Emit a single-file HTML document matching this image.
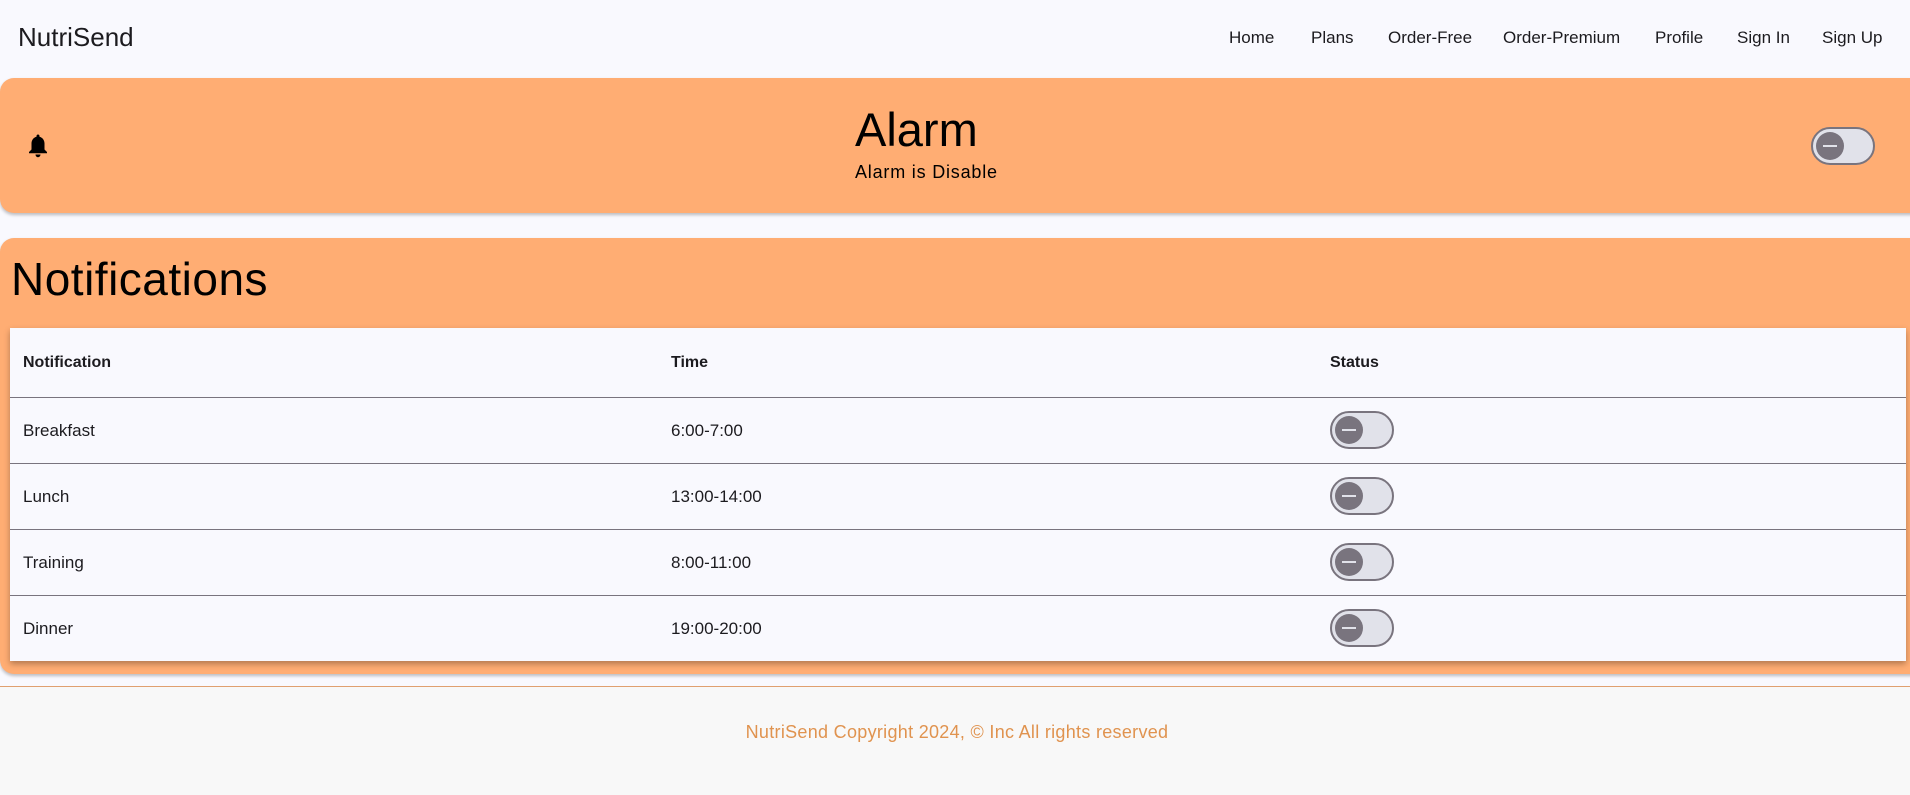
<!DOCTYPE html>
<html><head><style>
*{box-sizing:border-box;margin:0;padding:0}
body{width:1910px;height:795px;background:#f9f9fe;font-family:"Liberation Sans",sans-serif;color:#1c1b1f;position:relative;overflow:hidden}
.abs{position:absolute;white-space:nowrap}
.nav a{position:absolute;top:28px;font-size:17px;color:#1c1b1f;text-decoration:none}
.card{position:absolute;left:0;width:1930px;background:#ffad73;border-radius:14px;box-shadow:0 2px 3px rgba(0,0,0,.25)}
.tog{position:absolute;width:64px;height:38px;border:2px solid #79747e;border-radius:19px;background:#e1e2ea}
.tog::before{content:"";position:absolute;left:3px;top:3px;width:28px;height:28px;border-radius:50%;background:#79747e}
.tog::after{content:"";position:absolute;left:10px;top:16px;width:14px;height:2px;background:#e1e2ea}
.table{position:absolute;left:10px;top:328px;width:1896px;height:333px;background:#f9f9fe;box-shadow:0 3px 6px rgba(0,0,0,.3)}
.row{position:absolute;left:0;width:100%;height:66px;border-top:1px solid #79747e;font-size:17px}
.row span{position:absolute;top:23px}
</style></head><body>
<div class="abs" style="left:18px;top:22px;font-size:26px">NutriSend</div>
<div class="nav">
<a style="left:1229px">Home</a><a style="left:1311px">Plans</a><a style="left:1388px">Order-Free</a><a style="left:1503px">Order-Premium</a><a style="left:1655px">Profile</a><a style="left:1737px">Sign In</a><a style="left:1822px">Sign Up</a>
</div>
<div class="card" style="top:78px;height:135px">
<svg class="abs" style="left:26px;top:55px" width="24" height="26" viewBox="0 0 24 26"><path d="M12 1.5c1 0 1.5.7 1.5 1.6v.6c3.2.8 5 3.6 5 6.8v6l2.5 2.5v1.3H3v-1.3l2.5-2.5v-6c0-3.2 1.8-6 5-6.8v-.6c0-.9.5-1.6 1.5-1.6zM9.5 21.5h5c0 1.5-1.1 2.7-2.5 2.7s-2.5-1.2-2.5-2.7z" fill="#000"/></svg>
<div class="abs" style="left:855px;top:24px;font-size:47px;color:#000">Alarm</div>
<div class="abs" style="left:855px;top:84px;font-size:18px;letter-spacing:.8px;color:#000">Alarm is Disable</div>
<div class="tog" style="left:1811px;top:49px"></div>
</div>
<div class="card" style="top:238px;height:436px">
<div class="abs" style="left:11px;top:14px;font-size:46px;letter-spacing:.5px;color:#000">Notifications</div>
</div>
<div class="table">
<div class="row" style="top:0;height:69px;border-top:none;font-weight:bold;font-size:16px"><span style="left:13px;top:26px">Notification</span><span style="left:661px;top:26px">Time</span><span style="left:1320px;top:26px">Status</span></div>
<div class="row" style="top:69px"><span style="left:13px">Breakfast</span><span style="left:661px">6:00-7:00</span><div class="tog" style="left:1320px;top:13px"></div></div>
<div class="row" style="top:135px"><span style="left:13px">Lunch</span><span style="left:661px">13:00-14:00</span><div class="tog" style="left:1320px;top:13px"></div></div>
<div class="row" style="top:201px"><span style="left:13px">Training</span><span style="left:661px">8:00-11:00</span><div class="tog" style="left:1320px;top:13px"></div></div>
<div class="row" style="top:267px"><span style="left:13px">Dinner</span><span style="left:661px">19:00-20:00</span><div class="tog" style="left:1320px;top:13px"></div></div>
</div>
<div class="abs" style="left:0;top:686px;width:1910px;height:109px;background:#f8f8f8;border-top:1px solid #e0a070"></div>
<div class="abs" style="left:0;top:722px;width:1910px;text-align:center;font-size:18px;letter-spacing:.3px;color:#e0934f;padding-left:4px">NutriSend Copyright 2024, © Inc All rights reserved</div>
</body></html>
